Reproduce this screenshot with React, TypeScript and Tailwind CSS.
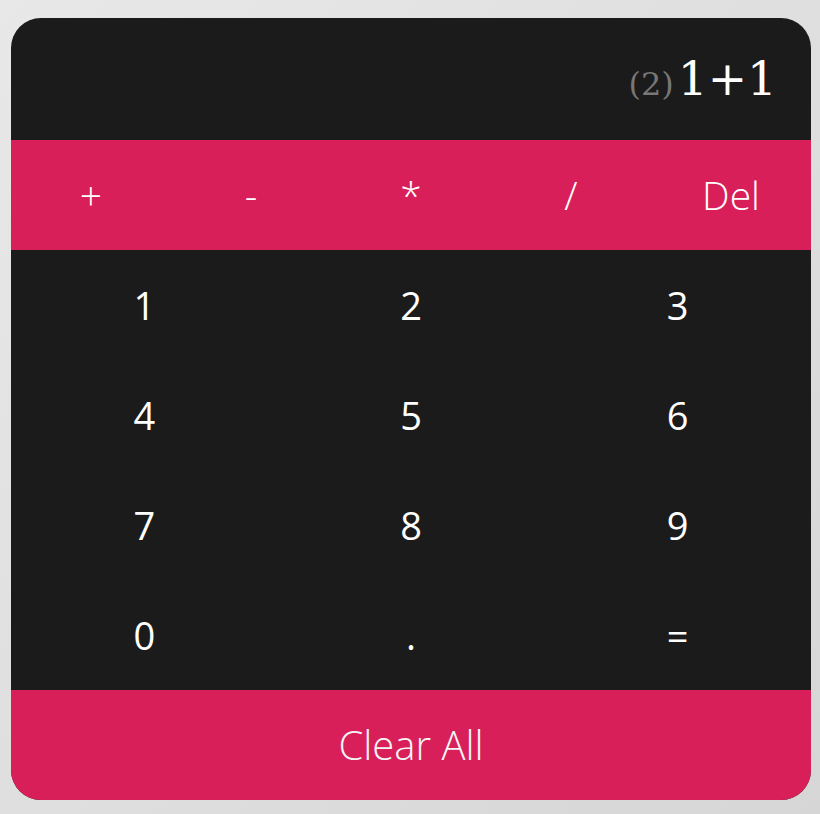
import React from "react";

const ops = ["+", "-", "*", "/", "Del"];
const nums = ["1", "2", "3", "4", "5", "6", "7", "8", "9", "0", ".", "="];

export default function App() {
  return (
    <div className="w-[820px] h-[814px] bg-gradient-to-br from-[#e8e8e8] to-[#d6d6d6] pt-[18px] pl-[11px]">
      <div
        className="w-[800px] h-[782px] rounded-[30px] overflow-hidden bg-[#1b1b1b] flex flex-col text-white"
        style={{ fontFamily: '"Open Sans", "Noto Sans", sans-serif' }}
      >
        <div
          className="h-[122px] flex items-center justify-end pr-[34px]"
          style={{ fontFamily: '"DejaVu Serif", serif' }}
        >
          <div className="flex items-baseline">
            <span className="text-[32px] text-[#777777] mr-[4px]">(2)</span>
            <span className="text-[47px] text-white">1+1</span>
          </div>
        </div>
        <div className="h-[110px] bg-[#d81f5a] grid grid-cols-5">
          {ops.map((o) => (
            <div key={o} className="flex items-center justify-center text-[39px] font-light">
              {o}
            </div>
          ))}
        </div>
        <div className="grid grid-cols-3 grid-rows-4 h-[440px]">
          {nums.map((n) => (
            <div key={n} className="flex items-center justify-center text-[38px] font-normal">
              {n}
            </div>
          ))}
        </div>
        <div className="h-[110px] bg-[#d81f5a] flex items-center justify-center text-[40px] font-light text-[#f4f4f4]">
          Clear All
        </div>
      </div>
    </div>
  );
}
